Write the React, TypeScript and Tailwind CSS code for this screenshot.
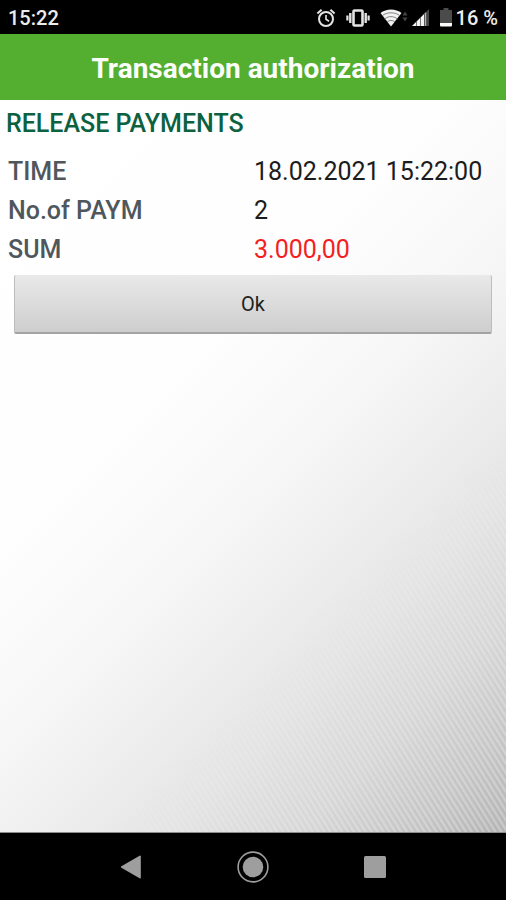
// App.tsx
import { FC } from "react";

interface DetailRow {
  label: string;
  value: string;
  highlight?: boolean;
}

const rows: DetailRow[] = [
  { label: "TIME", value: "18.02.2021 15:22:00" },
  { label: "No.of PAYM", value: "2" },
  { label: "SUM", value: "3.000,00", highlight: true },
];

const AlarmIcon = () => (
  <svg width="20" height="20" viewBox="0 0 20 20" fill="none" stroke="#e4e4e4" strokeWidth="2">
    <circle cx="10" cy="11" r="7" />
    <path d="M10 7v4.3l3 1.9" strokeWidth="1.6" />
    <path d="M1.4 5.4L5.6 1.8M18.6 5.4L14.4 1.8" />
  </svg>
);

const VibrateIcon = () => (
  <svg width="24" height="20" viewBox="0 0 24 20" fill="none" stroke="#e4e4e4">
    <rect x="7.5" y="2.5" width="9" height="15" rx="1" strokeWidth="2.6" />
    <path d="M4.3 5v10M19.7 5v10" strokeWidth="2.4" />
    <path d="M1.4 7.5v5M22.6 7.5v5" strokeWidth="2.2" />
  </svg>
);

const WifiIcon = () => (
  <svg width="28" height="20" viewBox="0 0 28 20">
    <path d="M0.5 5C6 0.3 16 0.3 21.5 5L11 18.5z" fill="#f2f2f2" />
    <path
      d="M2 7.8C7 3.8 15 3.8 20 7.8M4.5 11C8.5 7.8 13.5 7.8 17.5 11M7 14C9.5 12 12.5 12 15 14"
      fill="none"
      stroke="#777"
      strokeWidth="0.9"
    />
    <path d="M25 3.5l2.5 4h-5zM25 13.5l2.5-4h-5z" fill="#444" />
  </svg>
);

const SignalIcon = () => (
  <svg width="18" height="20" viewBox="0 0 18 20">
    <path d="M0 18L4 14V18zM4.5 13.5L8 10v8H4.5zM8.5 9.5L12 6v12H8.5z" fill="#f2f2f2" />
    <path d="M12.5 5.5l2-2V18h-2z" fill="#b0b0b0" />
    <path d="M15 3l2-2v17h-2z" fill="#444" />
  </svg>
);

const BatteryIcon = () => (
  <svg width="12" height="20" viewBox="0 0 12 20">
    <path d="M3.5 0h5v2H12v13H0V2h3.5z" fill="#4b4b4b" />
    <path d="M0 15h12v2.5q0 1-1 1H1q-1 0-1-1z" fill="#fafafa" />
  </svg>
);

const StatusBar: FC = () => (
  <div className="flex h-[34px] shrink-0 items-center bg-black px-2 pt-[2px] text-[20px] leading-6 font-medium text-[#ececec]">
    <span className="mr-auto">15:22</span>
    <div className="flex items-center gap-[10px]">
      <AlarmIcon />
      <VibrateIcon />
      <WifiIcon />
    </div>
    <div className="ml-1 flex items-center gap-[10px]">
      <SignalIcon />
      <BatteryIcon />
    </div>
    <span className="ml-1">16 %</span>
  </div>
);

const NavBar: FC = () => (
  <nav className="flex h-[67px] shrink-0 items-center justify-center bg-black">
    <button aria-label="Back" className="flex w-[122px] justify-center">
      <svg width="32" height="32" viewBox="0 0 32 32" fill="#9e9e9e">
        <path d="M24.6 4.7q1.2-.6 1.2.7v21.2q0 1.3-1.2.7L6.4 16.8q-1.2-.8 0-1.6z" />
      </svg>
    </button>
    <button aria-label="Home" className="flex w-[122px] justify-center">
      <svg width="32" height="32" viewBox="0 0 32 32" fill="#9e9e9e">
        <circle cx="16" cy="16" r="10.3" />
        <circle cx="16" cy="16" r="14.9" fill="none" stroke="#9e9e9e" strokeWidth="1.6" />
      </svg>
    </button>
    <button aria-label="Recent apps" className="flex w-[122px] justify-center">
      <svg width="32" height="32" viewBox="0 0 32 32" fill="#9e9e9e">
        <rect x="5" y="5" width="22" height="22" rx="1.5" />
      </svg>
    </button>
  </nav>
);

export const App: FC = () => {
  return (
    <div className="flex min-h-screen flex-col bg-black font-[Roboto,sans-serif]">
      <StatusBar />
      <header className="flex h-[66px] shrink-0 items-center justify-center bg-[#54ae2f] pt-1">
        <h1 className="text-[28px] leading-8 font-bold text-[#fbfdf9]">Transaction authorization</h1>
      </header>
      <main className="relative flex-1 border-b border-[#8c8c8c] bg-[linear-gradient(135deg,#ffffff_0%,#fefefe_36%,#f7f7f7_52%,#eeeeee_63%,#e6e6e6_73%,#dcdcdc_83%,#cccccc_92%,#b9b9b9_100%)]">
        {/* fine diagonal lines fading in towards the bottom right corner */}
        <div className="pointer-events-none absolute inset-0 bg-[repeating-linear-gradient(58deg,rgba(255,255,255,0.25)_0px,rgba(0,0,0,0.05)_3px,rgba(255,255,255,0.25)_5px)] [mask-image:linear-gradient(135deg,transparent_66%,black_95%)]" />
        <div className="relative">
          <h2 className="px-[6px] pt-2 text-[25px] leading-8 font-medium text-[#0b6140]">RELEASE PAYMENTS</h2>
          <table className="mt-3 w-full table-fixed text-left text-[25px] leading-[39px]">
            <tbody>
              {rows.map((row) => (
                <tr key={row.label}>
                  <th scope="row" className="w-1/2 p-0 pl-2 font-medium text-[#4f575d]">
                    {row.label}
                  </th>
                  <td className={row.highlight ? "p-0 pl-px text-[#f3201f]" : "p-0 pl-px text-[#1c1c1c]"}>{row.value}</td>
                </tr>
              ))}
            </tbody>
          </table>
          <div className="px-[14px] pt-[6px]">
            <button className="h-[59px] w-full rounded-xs border-x border-b-2 border-x-[#bdbdbd] border-b-[#a3a3a3] bg-linear-to-b from-[#e9e9e9] to-[#cecece] text-[20px] leading-6 text-[#222]">
              Ok
            </button>
          </div>
        </div>
      </main>
      <NavBar />
    </div>
  );
};

export default App;
